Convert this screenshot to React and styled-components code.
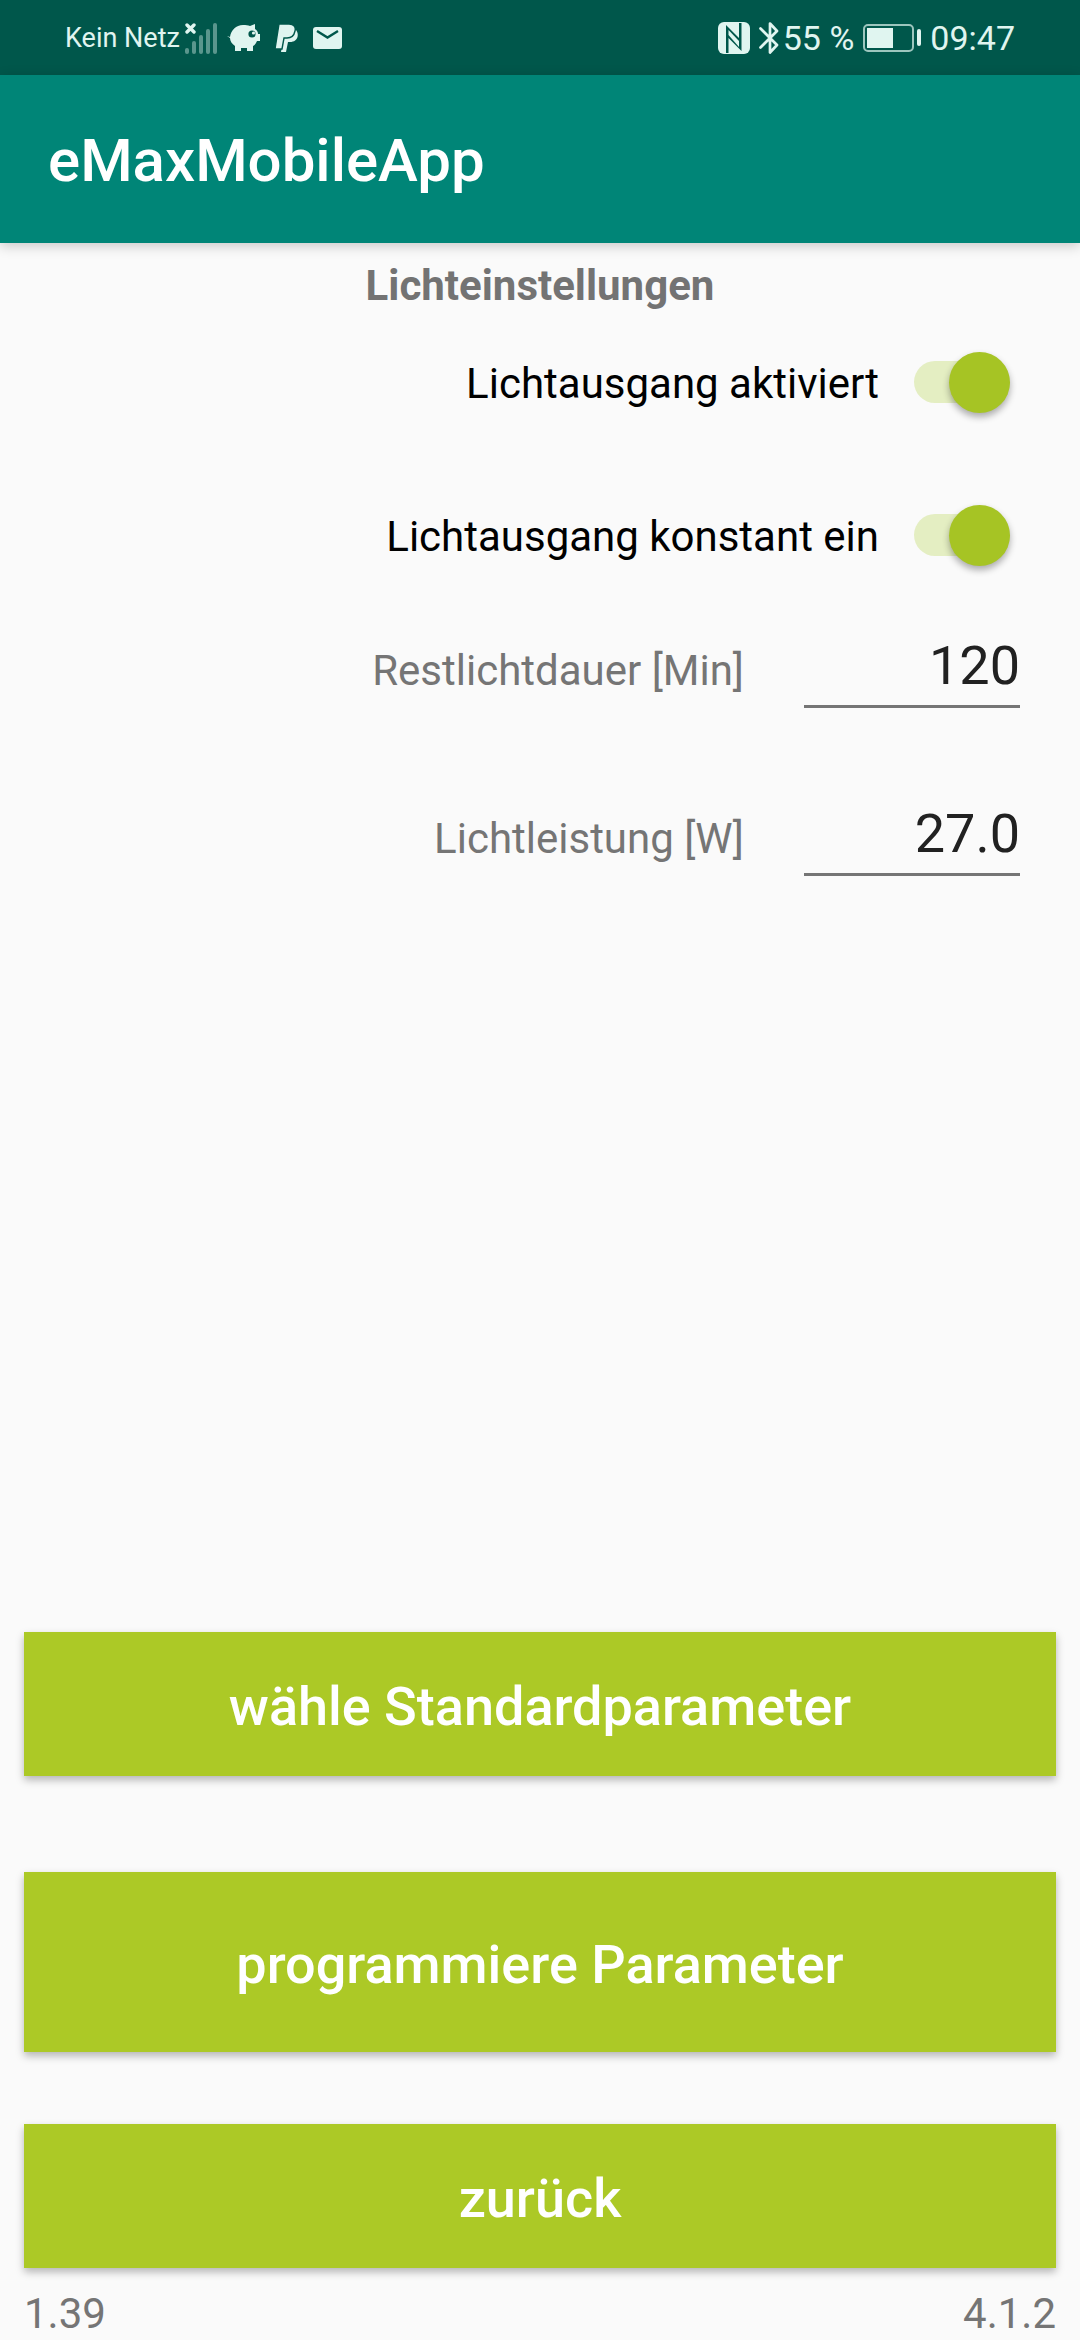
import React, { useState } from "react";
import styled, { createGlobalStyle } from "styled-components";

/* ===================== STYLES ===================== */

const GlobalStyle = createGlobalStyle`
  * {
    box-sizing: border-box;
  }

  body {
    margin: 0;
    background: #fafafa;
    font-family: Roboto, sans-serif;
  }
`;

const Screen = styled.div`
  min-height: 100vh;
  display: flex;
  flex-direction: column;
`;

const StatusBar = styled.div`
  height: 75px;
  padding: 0 65px;
  display: flex;
  align-items: center;
  justify-content: space-between;
  background: #00574b;
  color: #e0f5f0;
`;

const StatusGroup = styled.div`
  display: flex;
  align-items: center;
  gap: ${({ $gap }) => $gap}px;
`;

const StatusText = styled.span`
  font-size: ${({ $small }) => ($small ? 27 : 34)}px;
  line-height: 40px;
  white-space: nowrap;
`;

const AppBar = styled.header`
  height: 168px;
  padding: 4px 48px 0;
  display: flex;
  align-items: center;
  background: #008577;
  box-shadow: 0 3px 12px rgba(0, 0, 0, 0.2);
`;

const AppTitle = styled.h1`
  margin: 0;
  color: #fff;
  font-size: 60px;
  font-weight: 500;
  line-height: 72px;
`;

const Content = styled.main`
  flex: 1;
  padding: 18px 24px 0;
  display: flex;
  flex-direction: column;
`;

const Heading = styled.h2`
  margin: 0;
  color: #737373;
  font-size: 42px;
  font-weight: 700;
  line-height: 50px;
  text-align: center;
`;

const SwitchList = styled.div`
  margin-top: 35px;
  padding-right: 46px;
  display: flex;
  flex-direction: column;
  gap: 81px;
`;

const SwitchRow = styled.label`
  height: 72px;
  display: flex;
  align-items: center;
  justify-content: flex-end;
  gap: 35px;
`;

const SwitchText = styled.span`
  padding-top: 4px;
  color: #000;
  font-size: 42px;
  line-height: 50px;
`;

const Switch = styled.input`
  appearance: none;
  margin: 0;
  width: 96px;
  height: 61px;
  display: flex;
  align-items: center;
  justify-content: ${({ checked }) => (checked ? "flex-end" : "flex-start")};
  position: relative;
  cursor: pointer;

  &::before {
    content: "";
    position: absolute;
    inset: 9px 0 10px;
    border-radius: 21px;
    background: ${({ checked }) => (checked ? "#e4eec2" : "#b9b9b9")};
  }

  &::after {
    content: "";
    position: relative;
    width: 61px;
    height: 61px;
    border-radius: 50%;
    background: ${({ checked }) => (checked ? "#a6c424" : "#f1f1f1")};
    box-shadow: 0 4px 7px rgba(0, 0, 0, 0.32);
  }
`;

const FieldList = styled.div`
  margin-top: 63px;
  padding-right: 36px;
  display: flex;
  flex-direction: column;
  gap: 94px;
`;

const FieldRow = styled.div`
  display: flex;
  align-items: center;
  justify-content: flex-end;
  gap: 60px;
`;

const FieldLabel = styled.label`
  color: #757575;
  font-size: 42px;
  line-height: 50px;
`;

const FieldInput = styled.input`
  width: 216px;
  height: 74px;
  padding: 0 0 8px;
  border: none;
  border-bottom: 3px solid #757575;
  background: transparent;
  color: #212121;
  font-family: inherit;
  font-size: 54px;
  text-align: right;
  outline: none;
`;

const Actions = styled.div`
  margin-top: auto;
  display: flex;
  flex-direction: column;
`;

const ActionButton = styled.button`
  height: ${({ $tall }) => ($tall ? 180 : 144)}px;
  margin: ${({ $tall }) => ($tall ? "96px 0 72px" : "0")};
  padding: 4px 0 0;
  border: none;
  background: #acc926;
  color: #fff;
  font-family: inherit;
  font-size: 54px;
  font-weight: 500;
  box-shadow: 0 4px 8px rgba(0, 0, 0, 0.28);
  cursor: pointer;
`;

const Footer = styled.footer`
  padding: 21px 24px 1px;
  display: flex;
  justify-content: space-between;
  color: #757575;
  font-size: 42px;
  line-height: 50px;
`;

/* ===================== ICONS ===================== */

const SignalIcon = () => (
  <svg width="34" height="34" viewBox="0 0 34 34" fill="currentColor">
    <g opacity="0.4">
      <rect x="0" y="27" width="4" height="6" rx="2" />
      <rect x="7" y="20" width="4" height="13" rx="2" />
      <rect x="14" y="14" width="4" height="19" rx="2" />
      <rect x="21" y="8" width="4" height="25" rx="2" />
      <rect x="28" y="2" width="4" height="31" rx="2" />
    </g>
    <path
      d="M2 4l7 7M9 4l-7 7"
      stroke="currentColor"
      strokeWidth="3.4"
      strokeLinecap="round"
    />
  </svg>
);

const PiggyIcon = () => (
  <svg width="34" height="28" viewBox="0 0 34 28">
    <path
      d="M0 12l3 1C4 6 9 1 16 1c3 0 5 0 7 1l5-2v5c2 1 3 3 3 5h2v7h-3c-1 2-2 4-4 5v5h-6v-3h-6v3H8v-5c-3-2-5-5-5-8z"
      fill="currentColor"
    />
    <circle cx="25" cy="10" r="3.6" fill="#00574b" />
    <circle cx="26.5" cy="9" r="1.6" fill="currentColor" />
  </svg>
);

const PaypalIcon = () => (
  <svg width="24" height="29" viewBox="0 0 24 29">
    <path
      d="M21 7c3 3 3 12-6 12h-2l-2 10H6l3-16z"
      fill="currentColor"
    />
    <path
      d="M4 1h10c5 0 7 3 6 7-1 5-4 7-8 7H9L7 26H0z"
      fill="currentColor"
      stroke="#00574b"
      strokeWidth="1.4"
    />
  </svg>
);

const MailIcon = () => (
  <svg width="29" height="24" viewBox="0 0 29 24">
    <rect y="1" width="29" height="22" rx="3" fill="currentColor" />
    <path
      d="M4 5l10.500 6.500L25 5"
      fill="none"
      stroke="#00574b"
      strokeWidth="2.4"
    />
  </svg>
);

const NfcIcon = () => (
  <svg width="32" height="32" viewBox="0 0 32 32">
    <rect width="32" height="32" rx="6" fill="currentColor" />
    <path
      d="M8 3l13 13V1h2.500v28L10.500 16v15H8z"
      fill="#00574b"
    />
    <path d="M10.500 8L21 19v6L10.500 13z" fill="currentColor" />
  </svg>
);

const BluetoothIcon = () => (
  <svg width="20" height="32" viewBox="0 0 20 32">
    <path
      d="M1.500 6.500L18 23l-7 7.500v-29L18 9 1.500 25.500"
      fill="none"
      stroke="currentColor"
      strokeWidth="2.700"
      strokeLinejoin="round"
      strokeLinecap="round"
    />
  </svg>
);

const BatteryIcon = () => (
  <svg width="58" height="28" viewBox="0 0 58 28">
    <rect
      x="1"
      y="1"
      width="49"
      height="26"
      rx="4"
      fill="none"
      stroke="currentColor"
      strokeOpacity="0.7"
      strokeWidth="2"
    />
    <rect x="4" y="4" width="26" height="20" fill="currentColor" />
    <rect x="54" y="5" width="4" height="17" rx="2" fill="currentColor" />
  </svg>
);

/* ===================== COMPONENT ===================== */

export default function App() {
  const [active, setActive] = useState(true);
  const [constant, setConstant] = useState(true);
  const [duration, setDuration] = useState("120");
  const [power, setPower] = useState("27.0");

  return (
    <>
      <GlobalStyle />
      <Screen>
        <StatusBar>
          <StatusGroup $gap={8}>
            <StatusGroup $gap={5}>
              <StatusText $small>Kein Netz</StatusText>
              <SignalIcon />
            </StatusGroup>
            <StatusGroup $gap={14}>
              <PiggyIcon />
              <PaypalIcon />
              <MailIcon />
            </StatusGroup>
          </StatusGroup>

          <StatusGroup $gap={9}>
            <NfcIcon />
            <StatusGroup $gap={4}>
              <BluetoothIcon />
              <StatusText>55 %</StatusText>
            </StatusGroup>
            <BatteryIcon />
            <StatusText>09:47</StatusText>
          </StatusGroup>
        </StatusBar>

        <AppBar>
          <AppTitle>eMaxMobileApp</AppTitle>
        </AppBar>

        <Content>
          <Heading>Lichteinstellungen</Heading>

          {/* -------- SWITCHES -------- */}
          <SwitchList>
            <SwitchRow>
              <SwitchText>Lichtausgang aktiviert</SwitchText>
              <Switch
                type="checkbox"
                checked={active}
                onChange={(e) => setActive(e.target.checked)}
              />
            </SwitchRow>
            <SwitchRow>
              <SwitchText>Lichtausgang konstant ein</SwitchText>
              <Switch
                type="checkbox"
                checked={constant}
                onChange={(e) => setConstant(e.target.checked)}
              />
            </SwitchRow>
          </SwitchList>

          {/* -------- VALUES -------- */}
          <FieldList>
            <FieldRow>
              <FieldLabel htmlFor="duration">Restlichtdauer [Min]</FieldLabel>
              <FieldInput
                id="duration"
                inputMode="numeric"
                value={duration}
                onChange={(e) => setDuration(e.target.value)}
              />
            </FieldRow>
            <FieldRow>
              <FieldLabel htmlFor="power">Lichtleistung [W]</FieldLabel>
              <FieldInput
                id="power"
                inputMode="decimal"
                value={power}
                onChange={(e) => setPower(e.target.value)}
              />
            </FieldRow>
          </FieldList>

          {/* -------- ACTIONS -------- */}
          <Actions>
            <ActionButton>wähle Standardparameter</ActionButton>
            <ActionButton $tall>programmiere Parameter</ActionButton>
            <ActionButton>zurück</ActionButton>
          </Actions>
        </Content>

        <Footer>
          <span>1.39</span>
          <span>4.1.2</span>
        </Footer>
      </Screen>
    </>
  );
}
